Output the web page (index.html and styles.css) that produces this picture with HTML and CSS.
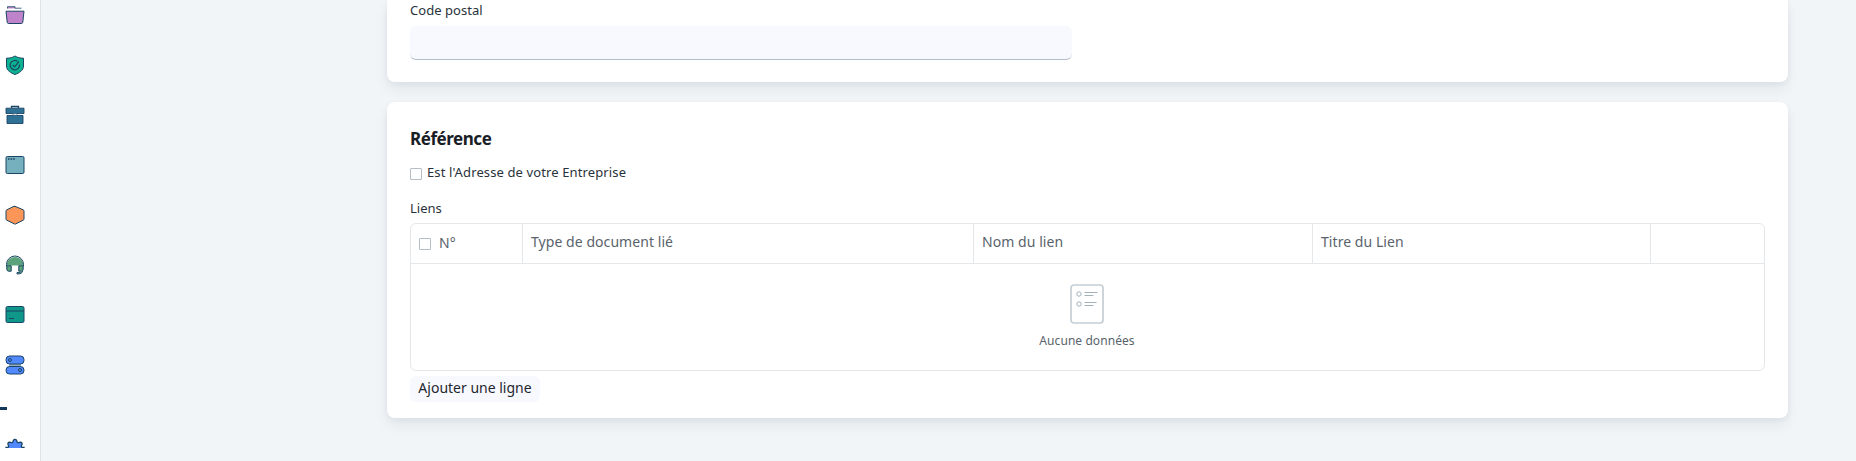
FILE: index.html
```html
<!DOCTYPE html>
<html lang="fr">
<head>
<meta charset="utf-8">
<title>Adresse</title>
<link rel="stylesheet" href="styles.css">
</head>
<body>
<div class="app">
  <nav class="sidebar">
    <div class="nav-list">
      <svg class="nav-icon" viewBox="0 0 20 20"><path d="M2.500 3.500V1.700h7.500V3.200h6.500" fill="#bf83cb" stroke="#1b4565" stroke-width=".8"/><path d="M1 6.200h18l-1.200 11a1.500 1.500 0 0 1-1.500 1.300H3.700a1.500 1.500 0 0 1-1.500-1.300z" fill="#bf83cb" stroke="#1b4565"/></svg>
      <svg class="nav-icon" viewBox="0 0 20 20"><path d="M10 1C7.500 2.700 5 3.200 1.500 3.200V11c0 4.500 4.500 7 8.500 8.500 4-1.500 8.500-4 8.500-8.500V3.200C15 3.200 12.500 2.700 10 1z" fill="#0db391" stroke="#1b4565"/><path d="M12.500 6.300a4.700 4.700 0 1 0 2 3.200M7.700 10l1.800 1.800L14 6.500" fill="none" stroke="#1b4565" stroke-width="1.200"/></svg>
      <svg class="nav-icon" viewBox="0 0 20 20"><path d="M6.500 3V1.500h7V3" fill="none" stroke="#1b4565" stroke-width="1.300"/><path d="M1 3.200h18v5.300H1zM2 10.500h16v8H2z" fill="#2e7195" stroke="#1b4565" stroke-width=".9"/><path d="M8 8.600h4v1.700H8z" fill="#fff" stroke="#1b4565" stroke-width=".5"/></svg>
      <svg class="nav-icon" viewBox="0 0 20 20"><rect x="1" y="1.500" width="18" height="17" rx="1.300" fill="#76afbd" stroke="#1b4565"/><path d="M3 4h7.500" stroke="#1b4565" stroke-width="1.500" stroke-dasharray="1.600 1"/></svg>
      <svg class="nav-icon" viewBox="0 0 20 20"><path d="M9 1.300L1.800 4.800Q1 5.200 1 6v8q0 .8.800 1.200L9.500 19h1l7.700-3.800q.8-.4.800-1.200V6q0-.8-.8-1.200L10 1.300z" fill="#fc9658" stroke="#1b4565"/></svg>
      <svg class="nav-icon" viewBox="0 0 20 20"><path d="M1.500 10.500a8.500 8.500 0 0 1 17 0h-4.500H6z" fill="#5ba47b"/><path d="M1.500 11V9.500a8.500 8.500 0 0 1 17 0V11" fill="none" stroke="#1b4565"/><path d="M1.800 10.800h4.400v5.400H3.500Q1.800 16 1.800 14zM13.800 10.800h4.400V14q0 2-1.700 2.200h-2.700z" fill="#5ba47b" stroke="#1b4565"/><path d="M17.500 16q0 3-5.500 3v-1.500h3.500" fill="#5ba47b" stroke="#1b4565" stroke-width=".9"/></svg>
      <svg class="nav-icon" viewBox="0 0 20 20"><rect x="1" y="1.500" width="18" height="16" rx="1.500" fill="#0f9789" stroke="#1b4565"/><path d="M1 6h18M4 13.500h5" stroke="#1b4565" stroke-width="1.200"/></svg>
      <svg class="nav-icon" viewBox="0 0 20 20"><path d="M4 9h12v3H4z" fill="#9baebc"/><rect x="1" y="1" width="18" height="8" rx="3.500" fill="#5289ff" stroke="#1b4565"/><rect x="1" y="11.500" width="18" height="7.500" rx="3.500" fill="#5289ff" stroke="#1b4565"/><circle cx="5" cy="5" r="1.500" fill="none" stroke="#1b4565"/><circle cx="15" cy="15" r="1.500" fill="none" stroke="#1b4565"/></svg>
    </div>
    <div class="nav-divider"></div>
    <svg class="nav-gear" viewBox="0 0 20 10"><path d="M1 12V9.300h2Q4.200 8.500 3 6.500 2.600 4.300 4.500 4.200 6.500 5 7.800 4.200 8.300 1.300 10 1.300T12.200 4.200Q13.500 5 15.500 4.200 17.400 4.300 17 6.500 15.800 8.500 17 9.300h2V12z" fill="#5289ff" stroke="#1b4565" stroke-width="1.300"/></svg>
  </nav>
  <main class="content">
    <section class="card card-address">
      <label class="label label-postal" for="postal"><span>Code postal</span></label>
      <input class="field" id="postal" type="text">
    </section>
    <section class="card card-reference">
      <h2 class="title"><span>Référence</span></h2>
      <label class="check-row"><i class="box"></i><span class="check-label">Est l'Adresse de votre Entreprise</span></label>
      <div class="label label-links"><span>Liens</span></div>
      <div class="grid">
        <div class="grid-head">
          <div class="cell cell-index"><i class="box"></i><span>N°</span></div>
          <div class="cell cell-type"><span>Type de document lié</span></div>
          <div class="cell"><span>Nom du lien</span></div>
          <div class="cell"><span>Titre du Lien</span></div>
          <div class="cell"></div>
        </div>
        <div class="empty">
          <svg class="empty-icon" viewBox="0 0 34 40"><rect x="1" y="1" width="32" height="38" rx="3" fill="none" stroke="#c5ced5" stroke-width="1.700"/><g fill="none" stroke="#a3b1bb"><circle cx="9" cy="10" r="2.200"/><circle cx="9" cy="20" r="2.200"/><path d="M14.500 8.500h13M14.500 11.500h9M14.500 18.500h12M14.500 21.500h9"/></g></svg>
          <span class="empty-text">Aucune données</span>
        </div>
      </div>
      <button class="add" type="button"><span>Ajouter une ligne</span></button>
    </section>
  </main>
</div>
</body>
</html>
```
FILE: styles.css
```css
* { box-sizing: border-box; }
body { margin: 0; background: #f1f5f8; font-family: "Noto Sans", sans-serif; color: #1f272e; }
.app { display: flex; height: 461px; overflow: hidden; }
.sidebar { width: 41px; flex: none; background: #fff; border-right: 1px solid #dde4ea; padding: 5px 0 0; }
.nav-list { display: flex; flex-direction: column; gap: 30px; padding-left: 5px; }
.nav-icon { display: block; width: 20px; height: 20px; }
.nav-divider { width: 7px; height: 3px; margin-top: 32px; background: #12395a; }
.nav-gear { display: block; width: 20px; height: 10px; margin: 28px 0 0 5px; overflow: hidden; }
.content { flex: 1; padding: 0 68px 0 346px; display: flex; flex-direction: column; gap: 20px; }
.card { background: #fff; padding: 0 23px; box-shadow: 0 8px 14px rgba(25, 39, 52, .06), 0 2px 6px rgba(25, 39, 52, .05); }
.card-address { height: 82px; flex: none; border-radius: 0 0 8px 8px; }
.card-reference { height: 316px; flex: none; border-radius: 8px; padding-top: 24px; }
.label { display: block; height: 20px; line-height: 20px; font-size: 13px; white-space: nowrap; color: #29323a; }
.label-postal { height: 26px; line-height: 21px; letter-spacing: .05px; }
.field { display: block; width: 662px; height: 34px; border: 0; border-bottom: 1px solid #b3bcc9; border-radius: 6px; background: #f8f9ff; padding: 0 10px; }
.title { margin: 0; height: 28px; line-height: 26px; font-size: 17px; font-weight: 700; letter-spacing: -.45px; white-space: nowrap; color: #192025; }
.check-row { display: flex; gap: 5px; height: 32px; margin-top: 8px; line-height: 21px; font-size: 13px; letter-spacing: .12px; white-space: nowrap; color: #29323a; }
.box { display: block; flex: none; width: 12px; height: 12px; border: 1px solid #b5bec6; border-radius: 1px; background: #fff; }
.check-row .box { margin-top: 6px; }
.label-links { margin-top: 3px; height: 26px; line-height: 22px; }
.grid { height: 148px; border: 1px solid #e4e8ea; border-radius: 6px; }
.grid-head { display: grid; grid-template-columns: 112px 451px 339px 338px 1fr; height: 40px; border-bottom: 1px solid #e4e8ea; }
.cell { border-right: 1px solid #e4e8ea; padding: 0 9px 0 8px; line-height: 36px; font-size: 14px; letter-spacing: .06px; white-space: nowrap; color: #59636b; }
.cell:last-child { border-right: 0; }
.cell-index { display: flex; gap: 8px; line-height: 38px; }
.cell-index .box { margin-top: 14px; }
.empty { display: flex; flex-direction: column; align-items: center; padding: 20px 1px 0 0; }
.empty-icon { display: block; width: 34px; height: 40px; }
.empty-text { margin-top: 8px; line-height: 18px; font-size: 12px; letter-spacing: .07px; white-space: nowrap; color: #59636b; }
.add { display: block; width: 130px; height: 26px; margin-top: 5px; padding: 0 0 2px; border: 0; border-radius: 6px; background: #f8f9ff; font: 14px/24px "Noto Sans", sans-serif; white-space: nowrap; color: #1f272e; }
```
